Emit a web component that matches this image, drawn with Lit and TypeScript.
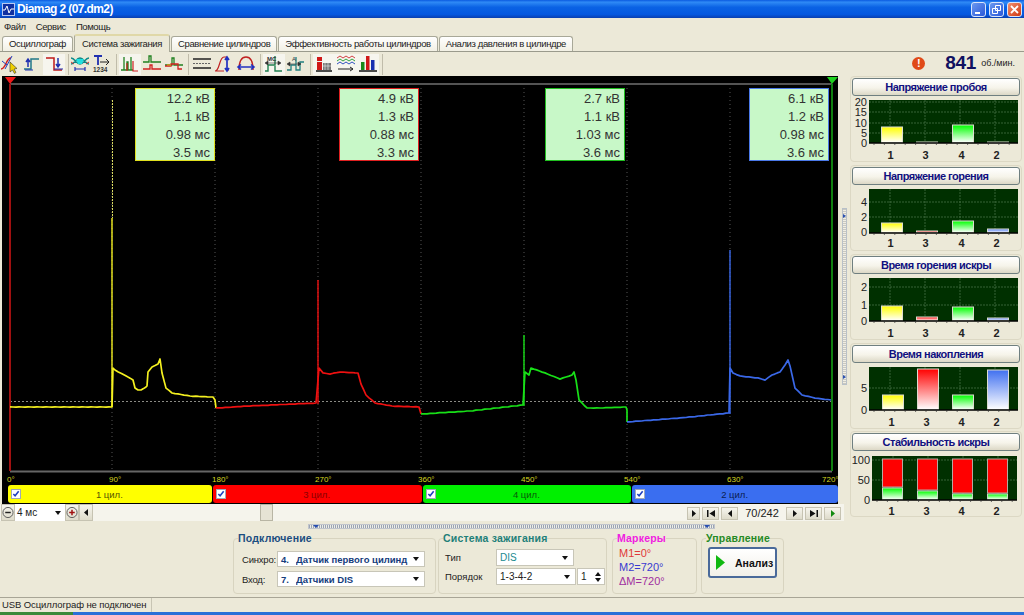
import { LitElement, html, css, svg } from 'lit';
import { customElement } from 'lit/decorators.js';

const YELLOW = '#ffff00';
const RED = '#ff0000';
const GREEN = '#00ff00';
const BLUE = '#4070f0';

type Pt = [number, number];

// traces are in screen coordinates, the plot svg uses a matching viewBox
const TRACES: { color: string; spike: Pt[]; pts: Pt[] }[] = [
  {
    color: '#f4f020',
    spike: [[112, 407], [112, 218]],
    pts: [[10, 407], [112, 407], [113, 368], [115, 370], [128, 377], [133, 380], [135, 388], [138, 390], [141, 390], [146, 387], [147, 386],
      [148, 372], [152, 367], [158, 364], [160, 359], [162, 373], [166, 388], [172, 393], [190, 396], [213, 397], [215, 400], [216, 408]],
  },
  {
    color: '#ee1010',
    spike: [[318, 404], [318, 280]],
    pts: [[216, 408], [250, 406], [316, 403], [319, 368], [323, 373], [330, 374], [340, 372], [358, 373], [361, 384], [366, 395], [375, 403], [392, 406], [419, 407], [421, 414]],
  },
  {
    color: '#18e018',
    spike: [[524, 406], [524, 335]],
    pts: [[421, 414], [470, 411], [523, 405], [525, 372], [529, 375], [531, 368], [545, 373], [560, 379], [572, 375], [574, 372], [576, 380], [579, 400], [587, 408], [600, 408], [626, 407], [627, 410], [627, 422]],
  },
  {
    color: '#3a68e8',
    spike: [[730, 414], [730, 250]],
    pts: [[627, 422], [680, 418], [729, 413], [730, 368], [733, 373], [740, 376], [758, 378], [765, 380], [772, 375], [780, 372], [785, 365], [788, 360], [790, 366], [795, 388], [802, 395], [815, 398], [831, 400]],
  },
];

const BOXES = [
  { x: 135, color: '#e0e020', lines: ['12.2 кВ', '1.1 кВ', '0.98 мс', '3.5 мс'] },
  { x: 339, color: '#e02020', lines: ['4.9 кВ', '1.3 кВ', '0.88 мс', '3.3 мс'] },
  { x: 545, color: '#20c020', lines: ['2.7 кВ', '1.1 кВ', '1.03 мс', '3.6 мс'] },
  { x: 749, color: '#4a78e8', lines: ['6.1 кВ', '1.2 кВ', '0.98 мс', '3.6 мс'] },
];

const GRID_X = [112, 215, 318, 421, 524, 627, 730];
const DEGREES: [number, string][] = [[10, '0°'], [112, '90°'], [215, '180°'], [318, '270°'], [421, '360°'], [524, '450°'], [627, '540°'], [730, '630°'], [825, '720°']];

const CYL = ['1', '3', '4', '2'];
const CYL_COLOR = ['yellow', 'red', 'green', 'blue'];
const CHANNELS = [
  { name: '1 цил.', cls: 'yellow', w: 204 },
  { name: '3 цил.', cls: 'red', w: 209 },
  { name: '4 цил.', cls: 'green', w: 209 },
  { name: '2 цил.', cls: 'blue', w: 206 },
];

interface Chart {
  title: string;
  top: number;
  plot: [number, number, number, number];
  ticks: [string, number][];
  bars: number[];
  stack?: number[];
  barX: number[];
  labelY: number;
}

const BAR_A = [881, 916, 952, 987];
const BAR_B = [882, 917, 952, 987];

const CHARTS: Chart[] = [
  { title: 'Напряжение пробоя', top: 97, plot: [869, 100, 1018, 143], ticks: [['20', 102], ['15', 112], ['10', 123], ['5', 133], ['0', 143]], bars: [127, 142, 125, 142], barX: BAR_A, labelY: 155 },
  { title: 'Напряжение горения', top: 186, plot: [869, 189, 1018, 233], ticks: [['4', 202], ['2', 217], ['0', 232]], bars: [223, 231, 221, 229], barX: BAR_A, labelY: 243 },
  { title: 'Время горения искры', top: 275, plot: [869, 278, 1018, 321], ticks: [['2', 287], ['1', 305], ['0', 321]], bars: [306, 317, 307, 318], barX: BAR_A, labelY: 333 },
  { title: 'Время накопления', top: 364, plot: [869, 367, 1018, 410], ticks: [['5', 388], ['0', 410]], bars: [395, 369, 395, 370], barX: BAR_B, labelY: 422 },
  { title: 'Стабильность искры', top: 452, plot: [872, 456, 1017, 500], ticks: [['100', 460], ['50', 480], ['0', 500]], bars: [459, 459, 459, 459], stack: [487, 490, 493, 493], barX: [882, 917, 952, 987], labelY: 511 },
];

// small jitter so traces don't look like clean vector lines
function tracePath(pts: Pt[]) {
  const out: string[] = [];
  let n = 0;
  for (let i = 0; i < pts.length - 1; i++) {
    const [x1, y1] = pts[i];
    const [x2, y2] = pts[i + 1];
    const steps = Math.max(1, Math.round(Math.abs(x2 - x1) / 3));
    for (let s = 0; s < steps; s++) {
      const t = s / steps;
      const j = Math.abs(x2 - x1) > 4 ? ((n++ * 37) % 3 - 1) * 0.15 : 0;
      out.push(`${(x1 + (x2 - x1) * t).toFixed(1)},${(y1 + (y2 - y1) * t + j).toFixed(1)}`);
    }
  }
  out.push(pts[pts.length - 1].join(','));
  return out.join(' ');
}

const ICONS = [
  svg`<path d="M1 15c5 0 5-11 10-11" stroke="#d02020" fill="none" stroke-width="1.5"/><path d="M2 7l5 4M5 15L12 2" stroke="#2040c0" fill="none"/><path d="M10 8l0 10 2.500-2 2 3.500 1.500-1-2-3.500 3-.5z" fill="#f0d000" stroke="#333" stroke-width=".6"/>`,
  svg`<path d="M2 15h7V5h8" stroke="#207888" fill="none" stroke-width="1.5"/><path d="M6 13V5M4 8l2-3 2 3" stroke="#2030b0" fill="none" stroke-width="1.500"/><path d="M3 16h8" stroke="#2030b0"/>`,
  svg`<path d="M2 4h8v12h8" stroke="#c01818" fill="none" stroke-width="1.500"/><path d="M14 4v9M12 10l2 3 2-3" stroke="#2030b0" fill="none" stroke-width="1.500"/><path d="M10 15h9" stroke="#2030b0"/>`,
  svg`<path d="M1 4c4 0 5 6 9 6s5-6 9-6M1 10c4 0 5-6 9-6s5 6 9 6" stroke="#108888" fill="none" stroke-width="1.400"/><path d="M6 5h8l-2 5h-4z" fill="#20e0e0"/><path d="M1 8l3 2M19 8l-3 2" stroke="#d03030"/><path d="M5 15h10M5 13v4M15 13v4" stroke="#2030b0" fill="none" stroke-width="1.200"/>`,
  svg`<path d="M2 2h8M6 2v9" stroke="#2030b0" stroke-width="1.800" fill="none"/><path d="M8 8h9M14 5l3 3-3 3" stroke="#222" fill="none"/><text x="1" y="18" font-size="6.500" font-weight="bold" font-family="Liberation Sans" fill="#333">1234</text>`,
  svg`<path d="M1 16h3V3M4 16h3V8h1v8h3V3M11 16h2" stroke="#208020" fill="none" stroke-width="1.300"/><path d="M7 9v8M13 7v10h5" stroke="#d02020" fill="none" stroke-width="1.200"/>`,
  svg`<path d="M1 8h6V2h2v6h10" stroke="#208020" fill="none" stroke-width="1.300"/><path d="M1 15h7v-4h2v4h9" stroke="#d02020" fill="none" stroke-width="1.300"/>`,
  svg`<path d="M1 11h7V4h2v7h9" stroke="#208020" fill="none" stroke-width="1.300"/><path d="M1 12h6v-2h7v5h4" stroke="#d02020" fill="none" stroke-width="1.300"/><path d="M3 11h4" stroke="#d09020" stroke-width="1.500"/>`,
  svg`<path d="M1 5h18M1 14h18" stroke="#222" fill="none" stroke-width="1.400"/><path d="M1 9.500h18" stroke="#666" stroke-dasharray="2 1"/>`,
  svg`<path d="M1 17c5 0 4-14 9-14h3M1 17h9M12 16h3" stroke="#c02020" fill="none" stroke-width="1.200"/><path d="M13 3v14M11 6l2-3 2 3M11 14l2 3 2-3" stroke="#2030c0" fill="none" stroke-width="1.700"/>`,
  svg`<path d="M3 16C3 6 6 3 10 3s7 3 7 13" stroke="#c02020" fill="none" stroke-width="1.400"/><path d="M2 13h16M5 10.500L2 13l3 2.500M15 10.500l3 2.500-3 2.500" stroke="#2030c0" fill="none" stroke-width="1.600"/>`,
  svg`<path d="M1 17h3v-6h7V2M11 12v5h7" stroke="#208050" fill="none" stroke-width="1.400"/><path d="M3 9h12M1 9l3-2v4zM17 9l-3-2v4z" stroke="#333" fill="#333" stroke-width=".6"/><text x="3" y="6.500" font-size="6" font-weight="bold" font-family="Liberation Sans" fill="#333">МС</text>`,
  svg`<path d="M1 16h4v-5h5V3M10 11v5h4V8h4" stroke="#208080" fill="none" stroke-width="1.300"/><path d="M3 10h11M1 10l3-2v4zM15 10l-3-2v4z" stroke="#333" fill="#333" stroke-width=".6"/><text x="6" y="7" font-size="6" font-family="Liberation Sans" fill="#333">А</text>`,
  svg`<rect x="3" y="3" width="5" height="13" fill="#d01818"/><rect x="3" y="7" width="5" height="1" fill="#eee"/><rect x="9" y="9" width="8" height="7" fill="#777"/><path d="M11 9v7M14 9v7M9 12h8" stroke="#ddd" stroke-width=".7"/><path d="M2 17h16" stroke="#111" stroke-width="1.500"/>`,
  svg`<path d="M1 4l3-2 3 2 3-2 3 2 3-2 3 2" stroke="#d04040" fill="none"/><path d="M1 7l3-2 3 2 3-2 3 2 3-2 3 2" stroke="#30a040" fill="none"/><path d="M1 10l3-2 3 2 3-2 3 2 3-2 3 2" stroke="#3050c0" fill="none"/><path d="M2 15h15M14 13l3 2-3 2" stroke="#222" fill="none"/>`,
  svg`<rect x="3" y="8" width="3.500" height="8" fill="#1a8a1a"/><rect x="8" y="2" width="3.500" height="14" fill="#d01818"/><rect x="13" y="6" width="3.500" height="10" fill="#1a30b0"/><path d="M1 17h18" stroke="#111" stroke-width="1.500"/>`,
];

// icon groups; pressed ones get the lighter flat background
const TOOL_GROUPS: { i: number; on?: boolean }[][] = [
  [{ i: 0 }, { i: 1 }, { i: 2, on: true }],
  [{ i: 3 }, { i: 4 }],
  [{ i: 5, on: true }, { i: 6 }, { i: 7 }],
  [{ i: 8 }, { i: 9 }, { i: 10 }],
  [{ i: 11, on: true }, { i: 12 }],
  [{ i: 13, on: true }, { i: 14, on: true }, { i: 15, on: true }],
];

@customElement('stat-chart')
class StatChart extends LitElement {
  static properties = { chart: { attribute: false } };
  declare chart: Chart;

  static styles = css`
    :host {
      display: block;
    }
    :host(:last-child) {
      margin-top: -1px;
    }
    .frame {
      display: flex;
      flex-direction: column;
      height: 86px;
      box-sizing: border-box;
      border: 1px solid #dcd8c4;
      border-radius: 4px;
      padding-top: 1px;
      align-items: center;
    }
    .head {
      width: 168px;
      height: 18px;
      flex: none;
      box-sizing: border-box;
      border: 1px solid #6f7f80;
      border-radius: 3px;
      background: linear-gradient(#ffffff, #f6f4ea 55%, #dcd8c6);
      color: #101080;
      font: bold 11px 'Liberation Sans', sans-serif;
      letter-spacing: -0.5px;
      line-height: 16px;
      text-align: center;
    }
    svg {
      display: block;
      flex: none;
      margin-top: 1px;
    }
    text {
      font-family: 'Liberation Sans', sans-serif;
    }
    .tick {
      font-size: 11px;
      fill: #222;
    }
    .cat {
      font-size: 11px;
      font-weight: bold;
      fill: #222;
    }
  `;

  render() {
    const c = this.chart;
    const [x1, y1, x2, y2] = c.plot;
    const w = 21;
    const vx = [x1 + 21, x1 + 56, x1 + 91, x1 + 126];
    const hy = [...c.ticks.map((t) => t[1]).filter((y) => y < y2 - 2)];
    return html`
      <div class="frame">
        <div class="head">${c.title}</div>
        <svg width="170" height="66" viewBox="851 ${c.top} 170 66">
          <defs>
            ${CYL_COLOR.map((n, i) => svg`
              <linearGradient id="g-${n}" x1="0" y1="0" x2="0" y2="1">
                <stop offset="0" stop-color=${[YELLOW, RED, GREEN, BLUE][i]}></stop>
                <stop offset="1" stop-color="#ffffff"></stop>
              </linearGradient>`)}
          </defs>
          <rect x=${x1} y=${y1} width=${x2 - x1} height=${y2 - y1} fill="#003000"></rect>
          ${vx.map((x) => svg`<line x1=${x} x2=${x} y1=${y1} y2=${y2} stroke="#4f7a4f" stroke-width=".7" stroke-dasharray="2 1"></line>`)}
          ${hy.map((y) => svg`<line x1=${x1} x2=${x2} y1=${y} y2=${y} stroke="#4f7a4f" stroke-width=".7" stroke-dasharray="2 1"></line>`)}
          ${c.ticks.map(([t, y]) => svg`<text class="tick" x=${x1 - 2} y=${y + 4} text-anchor="end">${t}</text>`)}
          ${c.bars.map((top, i) => {
            const x = c.barX[i];
            const stackY = c.stack?.[i];
            if (stackY !== undefined) {
              return svg`
                <rect x=${x + 0.5} y=${top} width=${w - 1} height=${stackY - top} fill="#ff0000" stroke="#b8a8a0"></rect>
                <rect x=${x + 0.5} y=${stackY + 1} width=${w - 1} height=${y2 - stackY - 1.5} fill="url(#g-green)" stroke="#c8d8c8"></rect>`;
            }
            return svg`<rect x=${x + 0.5} y=${top} width=${w} height=${y2 - top - 0.5} fill="url(#g-${CYL_COLOR[i]})" stroke="#dcdcd0"></rect>`;
          })}
          <line x1=${x1} x2=${x2} y1=${y2} y2=${y2} stroke="#000" stroke-width="1.4"></line>
          ${Array.from({ length: 14 }, (_, i) => svg`<line x1=${x1 + 5 + i * 10.4} x2=${x1 + 5 + i * 10.4} y1=${y2} y2=${y2 + 2} stroke="#333" stroke-width=".7"></line>`)}
          ${CYL.map((n, i) => svg`<text class="cat" x=${c.barX[i] + 9.500} y=${c.labelY + 4} text-anchor="middle">${n}</text>`)}
        </svg>
      </div>
    `;
  }
}

@customElement('app-root')
export class AppRoot extends LitElement {
  static styles = css`
    :host {
      display: block;
      width: 1024px;
      height: 615px;
      overflow: hidden;
      background: #ece9d8;
      color: #222;
      font: 10px 'Liberation Sans', sans-serif;
    }
    .titlebar {
      height: 18px;
      display: flex;
      align-items: center;
      padding: 0 2px;
      background: linear-gradient(#0a5ae0, #2f8af6 12%, #0a62e4 40%, #0558e0 80%, #0a3fb0);
      color: #fff;
      font: bold 12px 'Liberation Sans', sans-serif;
      letter-spacing: -0.6px;
    }
    .app-icon {
      width: 13px;
      height: 13px;
      margin-right: 2px;
      background: #1030a0;
      border: 1px solid #b8c8f0;
      box-sizing: border-box;
      flex: none;
    }
    .app-icon svg {
      display: block;
    }
    .title {
      flex: 1;
    }
    .win-btn {
      width: 15px;
      height: 15px;
      margin-left: 3px;
      box-sizing: border-box;
      border: 1px solid #d8e4fa;
      border-radius: 3px;
      background: linear-gradient(135deg, #6a98f0, #2a58d8);
      flex: none;
    }
    .win-btn svg {
      display: block;
    }
    .win-btn.close {
      background: linear-gradient(135deg, #f09070, #d03810);
    }
    .menu {
      height: 16px;
      display: flex;
      align-items: center;
      gap: 10px;
      padding-left: 4px;
      font-size: 9.500px;
      letter-spacing: -0.4px;
    }
    .tabs {
      height: 18px;
      box-sizing: border-box;
      display: flex;
      align-items: flex-end;
      padding-left: 2px;
      border-bottom: 1px solid #9a9a8c;
    }
    .tab {
      height: 15px;
      box-sizing: border-box;
      padding: 0 6px;
      margin-right: 1px;
      border: 1px solid #a8a898;
      border-bottom: none;
      border-radius: 3px 3px 0 0;
      line-height: 14px;
      font-size: 9.500px;
      background: linear-gradient(#fff, #f2f0e4);
      letter-spacing: -0.38px;
      white-space: nowrap;
    }
    .tab.on {
      height: 18px;
      line-height: 16px;
      margin-bottom: -1px;
      padding: 0 7px;
      background: #ece9d8;
      border-top: 2px solid #e0d8a8;
    }
    .toolbar {
      height: 24px;
      display: flex;
      align-items: center;
      margin-left: -1px;
    }
    .tool-group {
      display: flex;
      padding-right: 3px;
      margin-right: 2px;
      border-right: 1px solid #c0bcaa;
    }
    .tool-group:first-child {
      margin-right: 0;
    }
    .tool-group:last-of-type {
      border-right: none;
    }
    .tool {
      width: 22px;
      height: 21px;
      display: flex;
      align-items: center;
      justify-content: center;
    }
    .tool.on {
      background: #f6f5ee;
    }
    .rpm {
      margin-left: auto;
      display: flex;
      align-items: center;
      padding-right: 9px;
      margin-top: -2px;
    }
    .alert {
      width: 13px;
      height: 13px;
      border-radius: 50%;
      background: #e04a18;
      color: #fff;
      font: bold 11px/13px 'Liberation Sans', sans-serif;
      text-align: center;
      margin-right: 20px;
    }
    .rpm b {
      font: bold 19px 'Liberation Sans', sans-serif;
      letter-spacing: -0.3px;
      color: #101060;
      margin-right: 5px;
    }
    .rpm span {
      font-size: 9px;
    }
    .workspace {
      height: 445px;
      display: flex;
    }
    .scope {
      width: 838px;
      padding-left: 2px;
      box-sizing: border-box;
      flex: none;
    }
    .plot {
      position: relative;
      height: 409px;
      background: #000;
    }
    .plot svg {
      display: block;
    }
    .plot text {
      font: 8px 'Liberation Sans', sans-serif;
      fill: #d8d820;
    }
    .measure {
      position: absolute;
      top: 12px;
      width: 80px;
      height: 73px;
      box-sizing: border-box;
      border: 1px solid;
      background: #c8f8c8;
      color: #333;
      font-size: 13px;
      line-height: 18px;
      text-align: right;
      padding: 1px 4px 0;
    }
    .channels {
      height: 19px;
      display: flex;
      background: #000;
      padding: 0 0 1px 6px;
      box-sizing: border-box;
      gap: 1px;
    }
    .channel {
      display: flex;
      align-items: center;
      border-radius: 3px;
      box-sizing: border-box;
      padding-left: 3px;
      font-size: 9.500px;
    }
    .channel span {
      flex: 1;
      text-align: center;
      padding-right: 14px;
    }
    .yellow {
      background: #ffff00;
      color: #555500;
    }
    .red {
      background: #ff0000;
      color: #8a0000;
    }
    .green {
      background: #00f000;
      color: #0a5a0a;
    }
    .blue {
      background: #3a6ef0;
      color: #0a2050;
    }
    .check {
      width: 10px;
      height: 10px;
      background: #fff;
      border: 1px solid #a0a8b8;
      box-sizing: border-box;
      flex: none;
    }
    .check svg {
      display: block;
    }
    .scrollrow {
      height: 17px;
      display: flex;
      align-items: stretch;
      background: #f5f4ec;
      width: 844px;
      margin-left: -2px;
      padding-left: 1px;
      box-sizing: border-box;
    }
    .sbtn {
      width: 14px;
      box-sizing: border-box;
      background: linear-gradient(#f6f5ee, #dedbca);
      border: 1px solid #c6c3b2;
      display: flex;
      align-items: center;
      justify-content: center;
      flex: none;
      font-size: 8px;
      color: #111;
    }
    .sbtn svg {
      display: block;
    }
    .zoom-combo {
      width: 50px;
      display: flex;
      align-items: center;
      justify-content: space-between;
      background: #fff;
      padding: 0 4px 0 2px;
      box-sizing: border-box;
      font-size: 10px;
      flex: none;
    }
    .arrow {
      width: 0;
      height: 0;
      border-left: 3.500px solid transparent;
      border-right: 3.500px solid transparent;
      border-top: 4px solid #111;
      flex: none;
    }
    .track {
      flex: none;
      width: 594px;
      display: flex;
    }
    .thumb {
      margin-left: 167px;
      width: 13px;
      box-sizing: border-box;
      background: #e6e3d4;
      border: 1px solid #b8b5a4;
    }
    .pager {
      display: flex;
      align-items: stretch;
      gap: 2px;
      padding: 3px 0 1px 0;
    }
    .pager .sbtn {
      width: 17px;
    }
    .pager .sbtn.small {
      width: 13px;
    }
    .pager .count {
      width: 44px;
      text-align: center;
      line-height: 12px;
      font-size: 11px;
    }
    .vsplit {
      width: 5px;
      height: 177px;
      margin: 132px 0 0 4px;
      background: repeating-linear-gradient(#c8c8c0 0 1px, #f0eee4 1px 2px);
      border: 1px solid #b8c0c8;
      box-sizing: border-box;
      flex: none;
      display: flex;
      flex-direction: column;
      justify-content: space-between;
      padding: 5px 0;
    }
    .vsplit i {
      width: 0;
      height: 0;
      border-top: 2px solid transparent;
      border-bottom: 2px solid transparent;
      border-left: 3px solid #2a50b0;
    }
    .side {
      margin-left: 3px;
      width: 172px;
      display: flex;
      flex-direction: column;
      gap: 3px;
      flex: none;
    }
    .hsplit {
      height: 9px;
      display: flex;
      align-items: center;
      padding: 2px 0 0 308px;
      box-sizing: border-box;
    }
    .hsplit div {
      width: 407px;
      height: 5px;
      box-sizing: border-box;
      border: 1px solid #c0c4cc;
      background: repeating-linear-gradient(90deg, #9aa4b4 0 1px, #eeeee6 1px 2px);
      display: flex;
      justify-content: space-between;
      padding: 0 4px;
    }
    .hsplit i {
      width: 0;
      height: 0;
      border-left: 3px solid transparent;
      border-right: 3px solid transparent;
      border-top: 3px solid #2a50b0;
    }
    .bottom {
      height: 67px;
      display: flex;
      align-items: flex-start;
      padding-left: 233px;
      box-sizing: border-box;
    }
    fieldset {
      margin: 1px 0 0 0;
      padding: 0 0 0 6px;
      height: 63px;
      box-sizing: border-box;
      border: 1px solid #d8d4c0;
      border-radius: 4px;
      min-width: 0;
      flex: none;
    }
    legend {
      padding: 0;
      font: bold 10.500px/14px 'Liberation Sans', sans-serif;
      letter-spacing: 0.2px;
      margin-left: -2px;
    }
    .conn {
      width: 203px;
    }
    .conn legend {
      color: #1b4d80;
    }
    .ign {
      width: 169px;
      margin-left: 2px;
    }
    .ign legend {
      color: #1f7f78;
    }
    .mark {
      width: 85px;
      margin-left: 5px;
    }
    .mark legend {
      color: #f020e0;
    }
    .ctl {
      width: 83px;
      margin-left: 4px;
    }
    .ctl legend {
      color: #258a25;
    }
    .form {
      display: grid;
      align-items: center;
    }
    .conn .form {
      grid-template-columns: 35px 148px;
      row-gap: 4px;
      padding-left: 2px;
      margin-top: 6px;
      font-size: 9.500px;
      letter-spacing: -0.2px;
    }
    .ign .form {
      grid-template-columns: 50px 80px 28px;
      row-gap: 2px;
      column-gap: 1px;
      margin-top: 4px;
      font-size: 9.500px;
    }
    .combo {
      height: 16px;
      box-sizing: border-box;
      background: #fff;
      border: 1px solid #c8c6b8;
      display: flex;
      align-items: center;
      justify-content: space-between;
      padding: 0 5px 0 3px;
      overflow: hidden;
      white-space: nowrap;
      font-size: 10px;
    }
    .ign .combo {
      height: 17px;
    }
    .combo.strong {
      font-weight: bold;
      color: #153c7c;
      letter-spacing: 0;
      font-size: 9.500px;
      justify-content: flex-start;
    }
    .combo.strong u {
      text-decoration: none;
      width: 15px;
      flex: none;
    }
    .combo.strong em {
      font-style: normal;
      flex: 1;
      overflow: hidden;
    }
    .combo.wide {
      grid-column: span 2;
      width: 78px;
      color: #208a90;
    }
    .spin {
      justify-content: space-between;
      padding-right: 3px;
    }
    .spin i {
      display: flex;
      flex-direction: column;
      gap: 2px;
    }
    .arrow.up {
      border-top: none;
      border-bottom: 4px solid #111;
    }
    .markers {
      display: flex;
      flex-direction: column;
      font-size: 11px;
      line-height: 14px;
      margin-top: 1px;
    }
    .markers span:nth-child(1) {
      color: #e03838;
    }
    .markers span:nth-child(2) {
      color: #3a3ad0;
    }
    .markers span:nth-child(3) {
      color: #a030a0;
    }
    .run {
      width: 69px;
      height: 31px;
      margin-top: 2px;
      box-sizing: border-box;
      border: 2px solid #4a6a9a;
      border-radius: 3px;
      background: linear-gradient(#ffffff, #f2f0e8);
      display: flex;
      align-items: center;
      padding-left: 6px;
      gap: 10px;
      font: bold 10.500px 'Liberation Sans', sans-serif;
      color: #111;
    }
    .run svg {
      display: block;
      flex: none;
    }
    .status {
      height: 15px;
      box-sizing: border-box;
      border-top: 1px solid #a8a596;
      display: flex;
    }
    .status div {
      width: 152px;
      border-right: 1px solid #c8c5b4;
      padding-left: 2px;
      line-height: 14px;
      font-size: 9.500px;
      letter-spacing: -0.1px;
      white-space: nowrap;
      box-sizing: border-box;
    }
    .taskstrip {
      height: 3px;
      background: linear-gradient(90deg, #3a8a3a 0 73px, #2a70d8 73px);
    }
  `;

  private tool(i: number, on?: boolean) {
    return html`<div class="tool ${on ? 'on' : ''}"><svg width="20" height="20" viewBox="0 0 20 20">${ICONS[i]}</svg></div>`;
  }

  private tri(dir: 'l' | 'r', color = '#111') {
    const pts = dir === 'l' ? '6,1 6,8 2,4.500' : '2,1 2,8 6,4.500';
    return html`<svg width="8" height="9" viewBox="0 0 8 9"><polygon points=${pts} fill=${color}></polygon></svg>`;
  }

  private circleBtn(plus: boolean) {
    return html`<div class="sbtn">
      <svg width="13" height="13" viewBox="0 0 13 13">
        <circle cx="6.500" cy="6.500" r="5.500" fill="none" stroke="#555"></circle>
        <path d=${plus ? 'M3.500 6.500h6M6.500 3.500v6' : 'M3.500 6.500h6'} stroke=${plus ? '#a01010' : '#222'} stroke-width="1.600"></path>
      </svg>
    </div>`;
  }

  private edgeBtn(first: boolean) {
    return html`<div class="sbtn">
      <svg width="10" height="9" viewBox="0 0 10 9">
        <path d=${first ? 'M1 1h1.500v7H1zM9 1v7L3.500 4.500z' : 'M9 1H7.500v7H9zM1 1v7l5.500-3.500z'} fill="#111"></path>
      </svg>
    </div>`;
  }

  render() {
    return html`
      <div class="titlebar">
        <div class="app-icon">
          <svg width="11" height="11" viewBox="0 0 11 11"><path d="M0 6h2l2-4 2 7 2-4h3" stroke="#fff" fill="none"></path></svg>
        </div>
        <div class="title">Diamag 2 (07.dm2)</div>
        <div class="win-btn"><svg width="13" height="13" viewBox="0 0 13 13"><rect x="3" y="9" width="5" height="2" fill="#fff"></rect></svg></div>
        <div class="win-btn"><svg width="13" height="13" viewBox="0 0 13 13"><path d="M5.500 2.500h5v5h-5zM2.500 5.500h5v5h-5z" stroke="#fff" fill="none"></path></svg></div>
        <div class="win-btn close"><svg width="13" height="13" viewBox="0 0 13 13"><path d="M3 3l7 7M10 3l-7 7" stroke="#fff" stroke-width="1.800"></path></svg></div>
      </div>
      <div class="menu"><span>Файл</span><span>Сервис</span><span>Помощь</span></div>
      <div class="tabs">
        <div class="tab">Осциллограф</div>
        <div class="tab on">Система зажигания</div>
        <div class="tab">Сравнение цилиндров</div>
        <div class="tab">Эффективность работы цилиндров</div>
        <div class="tab">Анализ давления в цилиндре</div>
      </div>
      <div class="toolbar">
        ${TOOL_GROUPS.map((g) => html`<div class="tool-group">${g.map((t) => this.tool(t.i, t.on))}</div>`)}
        <div class="rpm"><div class="alert">!</div><b>841</b><span>об./мин.</span></div>
      </div>
      <div class="workspace">
        <div class="scope">
          <div class="plot">
            <svg width="836" height="409" viewBox="2 76 836 409">
              <line x1="10" x2="832" y1="84" y2="84" stroke="#a8a8a8"></line>
              <line x1="10" x2="832" y1="471.500" y2="471.500" stroke="#666" stroke-width="2"></line>
              ${GRID_X.map((x) => svg`<line x1=${x} x2=${x} y1="84" y2="471" stroke="#555" stroke-dasharray="1 3"></line>`)}
              <line x1="10" x2="832" y1="401.500" y2="401.500" stroke="#8a8a84" stroke-dasharray="2 2"></line>
              <line x1="10" x2="10" y1="84" y2="471" stroke="#a01010" stroke-width="2"></line>
              <line x1="832" x2="832" y1="84" y2="471" stroke="#108010" stroke-width="2"></line>
              <polygon points="5,77 16,77 10,84" fill="#f01818"></polygon>
              <polygon points="827,77 838,77 832,84" fill="#20d020"></polygon>
              <line x1="112.500" x2="112.500" y1="100" y2="218" stroke="#d8d860" stroke-dasharray="2 1"></line>
              ${TRACES.map((t) => svg`
                <line x1=${t.spike[0][0]} x2=${t.spike[1][0]} y1=${t.spike[0][1]} y2=${t.spike[1][1]} stroke=${t.color} stroke-width="1.400"></line>
                <polyline points=${tracePath(t.pts)} fill="none" stroke=${t.color} stroke-width="1.700" stroke-linejoin="round"></polyline>`)}
              ${DEGREES.map(([x, label]) => svg`<text x=${x - 3} y="482">${label}</text>`)}
            </svg>
            ${BOXES.map((b) => html`
              <div class="measure" style="left:${b.x - 2}px;border-color:${b.color}">
                ${b.lines.map((l) => html`<div>${l}</div>`)}
              </div>`)}
          </div>
          <div class="channels">
            ${CHANNELS.map((c) => html`
              <div class="channel ${c.cls}" style="width:${c.w}px">
                <div class="check"><svg width="8" height="8" viewBox="0 0 9 9"><path d="M1.500 4.500l2 2 4-5" stroke="#2040c0" stroke-width="1.800" fill="none"></path></svg></div>
                <span>${c.name}</span>
              </div>`)}
          </div>
          <div class="scrollrow">
            ${this.circleBtn(false)}
            <div class="zoom-combo">4 мс<i class="arrow"></i></div>
            ${this.circleBtn(true)}
            <div class="sbtn">${this.tri('l')}</div>
            <div class="track"><div class="thumb"></div></div>
            <div class="pager">
              <div class="sbtn small">${this.tri('r')}</div>
              ${this.edgeBtn(true)}
              <div class="sbtn">${this.tri('l')}</div>
              <div class="count">70/242</div>
              <div class="sbtn">${this.tri('r')}</div>
              ${this.edgeBtn(false)}
              <div class="sbtn">${this.tri('r', '#108a10')}</div>
            </div>
          </div>
        </div>
        <div class="vsplit"><i></i><i></i></div>
        <div class="side">
          ${CHARTS.map((c) => html`<stat-chart .chart=${c}></stat-chart>`)}
        </div>
      </div>
      <div class="hsplit"><div><i></i><i></i></div></div>
      <div class="bottom">
        <fieldset class="conn">
          <legend>Подключение</legend>
          <div class="form">
            <span>Синхро:</span>
            <div class="combo strong"><u>4.</u><em>Датчик первого цилинд</em><i class="arrow"></i></div>
            <span>Вход:</span>
            <div class="combo strong"><u>7.</u><em>Датчики DIS</em><i class="arrow"></i></div>
          </div>
        </fieldset>
        <fieldset class="ign">
          <legend>Система зажигания</legend>
          <div class="form">
            <span>Тип</span>
            <div class="combo wide">DIS<i class="arrow"></i></div>
            <span>Порядок</span>
            <div class="combo">1-3-4-2<i class="arrow"></i></div>
            <div class="combo spin">1<i><i class="arrow up"></i><i class="arrow"></i></i></div>
          </div>
        </fieldset>
        <fieldset class="mark">
          <legend>Маркеры</legend>
          <div class="markers"><span>M1=0°</span><span>M2=720°</span><span>ΔM=720°</span></div>
        </fieldset>
        <fieldset class="ctl">
          <legend>Управление</legend>
          <div class="run">
            <svg width="9" height="15" viewBox="0 0 9 15"><polygon points="0,0 9,7.500 0,15" fill="#10b810"></polygon></svg>
            Анализ
          </div>
        </fieldset>
      </div>
      <div class="status"><div>USB Осциллограф не подключен</div></div>
      <div class="taskstrip"></div>
    `;
  }
}

export { StatChart };
